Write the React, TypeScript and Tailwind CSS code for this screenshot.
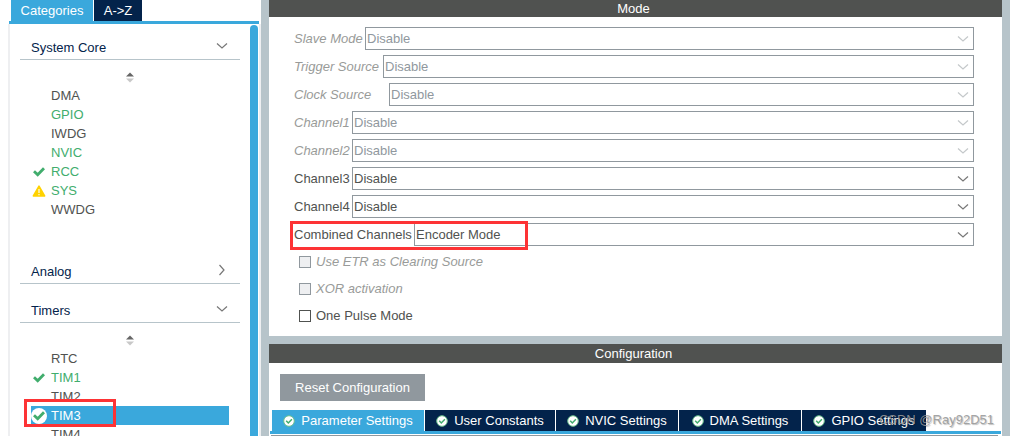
import { useState, type ReactNode } from "react";
import clsx from "clsx";

type PeripheralStatus = "none" | "enabled" | "active" | "warning";

interface Peripheral {
  name: string;
  status: PeripheralStatus;
}

interface ModeField {
  id: string;
  label: string;
  value: string;
  labelWidth: string;
  disabled?: boolean;
  highlighted?: boolean;
}

const SYSTEM_CORE: Peripheral[] = [
  { name: "DMA", status: "none" },
  { name: "GPIO", status: "enabled" },
  { name: "IWDG", status: "none" },
  { name: "NVIC", status: "enabled" },
  { name: "RCC", status: "active" },
  { name: "SYS", status: "warning" },
  { name: "WWDG", status: "none" },
];

const TIMERS: Peripheral[] = [
  { name: "RTC", status: "none" },
  { name: "TIM1", status: "active" },
  { name: "TIM2", status: "none" },
  { name: "TIM3", status: "active" },
  { name: "TIM4", status: "none" },
];

const MODE_FIELDS: ModeField[] = [
  { id: "slave", label: "Slave Mode", value: "Disable", labelWidth: "w-[71px]", disabled: true },
  { id: "trigger", label: "Trigger Source", value: "Disable", labelWidth: "w-[89px]", disabled: true },
  { id: "clock", label: "Clock Source", value: "Disable", labelWidth: "w-[95px]", disabled: true },
  { id: "ch1", label: "Channel1", value: "Disable", labelWidth: "w-[58px]", disabled: true },
  { id: "ch2", label: "Channel2", value: "Disable", labelWidth: "w-[58px]", disabled: true },
  { id: "ch3", label: "Channel3", value: "Disable", labelWidth: "w-[58px]" },
  { id: "ch4", label: "Channel4", value: "Disable", labelWidth: "w-[58px]" },
  { id: "combined", label: "Combined Channels", value: "Encoder Mode", labelWidth: "w-[120px]", highlighted: true },
];

const MODE_FLAGS = [
  { id: "etr", label: "Use ETR as Clearing Source", disabled: true },
  { id: "xor", label: "XOR activation", disabled: true },
  { id: "pulse", label: "One Pulse Mode", disabled: false },
];

const CONFIG_TABS = [
  { name: "Parameter Settings", width: "w-[152px]" },
  { name: "User Constants", width: "w-[130px]" },
  { name: "NVIC Settings", width: "w-[122px]" },
  { name: "DMA Settings", width: "w-[122px]" },
  { name: "GPIO Settings", width: "w-[124px]" },
];

function Chevron({ className }: { className?: string }) {
  return (
    <svg viewBox="0 0 12 8" className={className} fill="none" stroke="currentColor" aria-hidden="true">
      <path d="M1 1.5 6 6 11 1.5" strokeWidth="1.2" />
    </svg>
  );
}

function CheckMark() {
  return (
    <svg viewBox="0 0 12 10" className="h-[10px] w-3" fill="none" stroke="#41ad6d" aria-hidden="true">
      <path d="M1 4.2 4.7 7.8 11 1.3" strokeWidth="2.8" />
    </svg>
  );
}

function Warning() {
  return (
    <svg viewBox="0 0 14 12" className="h-3 w-[14px]" aria-hidden="true">
      <path d="M7 1.2 12.6 11H1.4Z" fill="#ffd200" stroke="#ffd200" strokeWidth="1.6" strokeLinejoin="round" />
      <path d="M7 4v4M7 9v1.2" stroke="#fff" strokeWidth="1.1" />
    </svg>
  );
}

function TabCheck() {
  return (
    <svg viewBox="0 0 12 12" className="h-3 w-3 shrink-0" aria-hidden="true">
      <circle cx="6" cy="6" r="5.3" fill="#fff" stroke="#6cc08d" strokeWidth="1" />
      <path d="M3.2 5.8 5.3 8 8.9 4.2" fill="none" stroke="#41ad6d" strokeWidth="1.5" />
    </svg>
  );
}

function Sorter() {
  return (
    <button type="button" aria-label="Sort" className="mx-auto block h-[11px] w-2">
      <svg viewBox="0 0 8 11" className="h-[11px] w-2" aria-hidden="true">
        <path d="M4 0.5 8 4.5H0Z" fill="#666" />
        <path d="M0 6.5H8L4 10.5Z" fill="#c8c8c8" />
      </svg>
    </button>
  );
}

function CategoryHeader({ title, open }: { title: string; open: boolean }) {
  return (
    <button
      type="button"
      aria-expanded={open}
      className="flex h-6 w-full items-center justify-between border-b border-[#b7c4ca] pr-3 pl-[11px] text-left text-[#03234b]"
    >
      <span>{title}</span>
      <Chevron className={clsx("mb-1 h-2 w-3 text-[#777]", !open && "-rotate-90")} />
    </button>
  );
}

function PeripheralList({
  items,
  selected,
  onSelect,
}: {
  items: Peripheral[];
  selected: string;
  onSelect: (name: string) => void;
}) {
  return (
    <ul className="mt-[3px] px-[11px]">
      {items.map(({ name, status }) => {
        const isSelected = name === selected;
        return (
          <li key={name} className="relative">
            <button
              type="button"
              onClick={() => onSelect(name)}
              className={clsx(
                "flex h-[19px] w-full items-center text-left",
                isSelected
                  ? "bg-[#3aa8dc] text-white"
                  : status === "none"
                    ? "text-[#505250]"
                    : "text-[#41ad6d]",
              )}
            >
              <span
                className={clsx(
                  "mr-1 flex h-4 w-4 items-center justify-center",
                  isSelected && "rounded-full bg-white",
                )}
              >
                {status === "active" && <CheckMark />}
                {status === "warning" && <Warning />}
              </span>
              {name}
            </button>
            {isSelected && (
              <span className="pointer-events-none absolute -top-[7px] -left-[7px] h-7 w-[92px] border-[3px] border-[#fd3335]" />
            )}
          </li>
        );
      })}
    </ul>
  );
}

function ModeRow({ field }: { field: ModeField }) {
  const { id, label, value, labelWidth, disabled, highlighted } = field;
  return (
    <div className="relative flex h-[23px] items-center">
      <label
        htmlFor={id}
        className={clsx(
          "shrink-0 whitespace-nowrap",
          labelWidth,
          disabled ? "text-[#999b99] italic" : "text-[#505250]",
        )}
      >
        {label}
      </label>
      <div className="relative h-full flex-1">
        <select
          id={id}
          disabled={disabled}
          defaultValue={value}
          className={clsx(
            "h-full w-full appearance-none border border-[#90989e] bg-white pr-6 pl-px opacity-100",
            disabled ? "text-[#90989e]" : "text-[#505250]",
          )}
        >
          <option>{value}</option>
        </select>
        <Chevron
          className={clsx(
            "pointer-events-none absolute top-2 right-[5px] h-2 w-3",
            disabled ? "text-[#c4c8ca]" : "text-[#777]",
          )}
        />
      </div>
      {highlighted && (
        <span className="pointer-events-none absolute -top-[2px] -left-1 h-[29px] w-[238px] border-[3px] border-[#fd3335]" />
      )}
    </div>
  );
}

function SectionTitle({ children, className }: { children: ReactNode; className?: string }) {
  return (
    <h2 className={clsx("flex items-center justify-center bg-[#505250] pr-1 text-white", className)}>
      {children}
    </h2>
  );
}

export default function App() {
  const [selected, setSelected] = useState("TIM3");
  const [tab, setTab] = useState(CONFIG_TABS[0].name);

  return (
    <div className="flex h-screen overflow-hidden bg-white font-['Liberation_Sans',Arial,sans-serif] text-[13px] leading-[19px]">
      <aside className="flex w-[261px] shrink-0 flex-col pl-2">
        <div className="flex h-[21px] shrink-0 gap-px pl-[3px] text-white">
          <button type="button" className="w-[82px] bg-[#3aa8dc]">
            Categories
          </button>
          <button type="button" className="w-12 bg-[#03234b]">
            A-&gt;Z
          </button>
        </div>
        <div className="mr-0.5 ml-px h-[3px] shrink-0 bg-[#3aa8dc]" />
        <div className="flex min-h-0 flex-1 border-x-2 border-[#eeeff1]">
          <div className="min-w-0 flex-1 overflow-hidden px-[10px] pt-3">
            <CategoryHeader title="System Core" open />
            <div className="h-[158px] pt-3">
              <Sorter />
              <PeripheralList items={SYSTEM_CORE} selected={selected} onSelect={setSelected} />
            </div>
            <div className="mt-[42px]">
              <CategoryHeader title="Analog" open={false} />
            </div>
            <div className="mt-[15px]">
              <CategoryHeader title="Timers" open />
            </div>
            <div className="pt-3">
              <Sorter />
              <PeripheralList items={TIMERS} selected={selected} onSelect={setSelected} />
            </div>
          </div>
          <div className="mt-px mr-px w-2 rounded-t-full bg-[#3aa8dc]" />
        </div>
      </aside>

      <main className="flex min-w-0 flex-1 flex-col border-x-8 border-[#b7c4ca]">
        <section>
          <SectionTitle className="h-[17px]">Mode</SectionTitle>
          <div className="flex flex-col gap-[5px] pt-[10px] pr-7 pl-[25px]">
            {MODE_FIELDS.map((field) => (
              <ModeRow key={field.id} field={field} />
            ))}
          </div>
          <div className="flex flex-col gap-2 pt-[6px] pb-[11px] pl-[30px]">
            {MODE_FLAGS.map(({ id, label, disabled }) => (
              <label
                key={id}
                className={clsx(
                  "flex items-center gap-[5px]",
                  disabled ? "text-[#999b99] italic" : "text-[#505250]",
                )}
              >
                <input
                  type="checkbox"
                  disabled={disabled}
                  className={clsx(
                    "h-3 w-3 appearance-none border checked:bg-[#3aa8dc]",
                    disabled ? "border-[#90989e] bg-[#eeeff1]" : "border-[#505250] bg-white",
                  )}
                />
                {label}
              </label>
            ))}
          </div>
        </section>

        <section className="relative flex min-h-0 flex-1 flex-col border-t-8 border-[#b7c4ca]">
          <SectionTitle className="h-[19px] shrink-0">Configuration</SectionTitle>
          <div className="pt-[11px] pb-[9px] pl-[11px]">
            <button type="button" className="block h-[27px] w-[145px] bg-[#90989e] text-white">
              Reset Configuration
            </button>
          </div>
          <div className="flex h-[21px] shrink-0 gap-px pl-[3px] text-white">
            {CONFIG_TABS.map(({ name, width }) => (
              <button
                key={name}
                type="button"
                onClick={() => setTab(name)}
                className={clsx(
                  "flex items-center justify-center gap-[6px] whitespace-nowrap",
                  width,
                  name === tab ? "bg-[#3aa8dc]" : "bg-[#03234b]",
                )}
              >
                <TabCheck />
                {name}
              </button>
            ))}
          </div>
          <div className="mr-px ml-px h-[3px] shrink-0 bg-[#3aa8dc]" />
          <div className="mt-px mr-1 ml-0.5 flex-1 border-t border-[#90989e]" />
          <p className="pointer-events-none absolute top-[66px] right-2 text-[#999]/90 [text-shadow:1px_1px_1px_rgb(0_0_0/0.25)]">
            CSDN @Ray92D51
          </p>
        </section>
      </main>
    </div>
  );
}
